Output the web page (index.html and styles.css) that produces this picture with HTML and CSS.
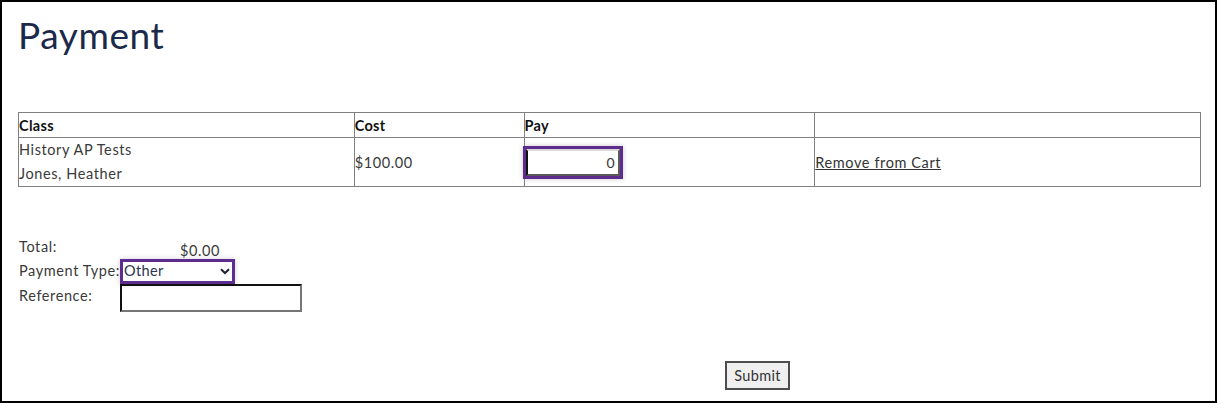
FILE: index.html
```html
<!DOCTYPE html>
<html lang="en">
<head>
<meta charset="utf-8">
<title>Payment</title>
<link rel="stylesheet" href="styles.css">
</head>
<body>
<div class="frame">
  <h1 class="title">Payment</h1>
  <table class="cart">
    <colgroup>
      <col class="c-class"><col class="c-cost"><col class="c-pay"><col class="c-act">
    </colgroup>
    <thead>
      <tr><th>Class</th><th>Cost</th><th>Pay</th><th></th></tr>
    </thead>
    <tbody>
      <tr>
        <td><div class="line">History AP Tests</div><div class="line">Jones, Heather</div></td>
        <td>$100.00</td>
        <td><input class="pay-input" type="text" value="0"></td>
        <td><a class="remove" href="#">Remove from Cart</a></td>
      </tr>
    </tbody>
  </table>
  <div class="summary">
    <div class="lbl lbl-total">Total:</div>
    <div class="total-val">$0.00</div>
    <div class="lbl lbl-type">Payment Type:</div>
    <div class="sel-wrap">
      <select class="sel"><option>Other</option></select>
      <svg class="chev" width="10" height="7" viewBox="0 0 10 7"><path d="M1 1.2 L5 5 L9 1.2" fill="none" stroke="#1c2333" stroke-width="2"/></svg>
    </div>
    <div class="lbl lbl-ref">Reference:</div>
    <div><input class="ref-input" type="text"></div>
  </div>
  <div class="actions"><button class="submit" type="button">Submit</button></div>
</div>
</body>
</html>
```
FILE: styles.css
```css
html, body { margin: 0; padding: 0; background: #fff; }
body { font-family: Lato, "Open Sans", Arial, sans-serif; color: #3a3a3a; }
.frame {
  box-sizing: border-box;
  width: 1217px;
  height: 403px;
  border: 2px solid #000;
  padding: 0 16px;
}
.title {
  margin: 11px 0 0 0;
  font-size: 37px;
  font-weight: 400;
  line-height: 44px;
  color: #1b2a4a;
  letter-spacing: 0.6px;
}
.cart {
  margin-top: 55px;
  width: 1183px;
  border-collapse: collapse;
  border: 1px solid #808080;
  font-size: 14.5px;
  letter-spacing: 0.6px;
}
.c-class { width: 336px; }
.c-cost { width: 170px; }
.c-pay { width: 291px; }
.c-act { width: 386px; }
.cart th, .cart td {
  border: 1px solid #808080;
  padding: 0;
  text-align: left;
  vertical-align: middle;
}
.cart th {
  height: 23px;
  font-weight: 700;
  color: #111;
  padding-top: 1px;
  letter-spacing: 0.3px;
}
.cart td { height: 48px; color: #3a3a3a; }
.line { line-height: 24px; }
.pay-input {
  box-sizing: border-box;
  width: 94px;
  height: 27px;
  margin: 1px 0 0 1px;
  border: 2px solid;
  border-color: #d8d8d8 #5a5a5a #5a5a5a #111;
  outline: 3px solid #5e2b8f;
  box-shadow: 0 0 5px 3px rgba(0,0,0,0.22);
  font-family: inherit;
  font-size: 14px;
  text-align: right;
  padding: 0 3px;
  color: #333;
  display: block;
}
.remove { color: #333; text-decoration: underline; }
.summary {
  margin-top: 52px;
  display: grid;
  grid-template-columns: 102px auto;
  justify-content: start;
  font-size: 14.5px;
  letter-spacing: 0.6px;
}
.lbl { padding-left: 1px; color: #3a3a3a; white-space: nowrap; }
.lbl-total { line-height: 16px; }
.total-val { padding: 4px 0 0 60px; line-height: 16px; }
.lbl-type { padding-top: 3px; }
.sel-wrap { position: relative; margin-top: 3px; width: 109px; height: 19px; margin-left: 3px; }
.sel {
  appearance: none;
  -webkit-appearance: none;
  box-sizing: border-box;
  width: 109px;
  height: 19px;
  border: 0;
  outline: 3px solid #5e2b8f;
  box-shadow: 0 0 5px 3px rgba(0,0,0,0.2);
  background: #fff;
  font-family: inherit;
  font-size: 14.5px;
  letter-spacing: 0.4px;
  color: #2a3350;
  padding: 0 0 2px 1px;
  margin: 0;
  display: block;
}
.chev { position: absolute; left: 97px; top: 6px; pointer-events: none; }
.lbl-ref { padding-top: 6px; }
.ref-input {
  box-sizing: border-box;
  width: 182px;
  height: 28px;
  margin-top: 3px;
  border: 2px solid;
  border-color: #111 #767676 #767676 #111;
  display: block;
}
.actions { padding-left: 707px; margin-top: 49px; }
.submit {
  box-sizing: border-box;
  width: 65px;
  height: 29px;
  border: 2px solid #4d4d4d;
  background: #efefef;
  font-family: inherit;
  font-size: 14.5px;
  letter-spacing: 0.3px;
  color: #333;
  padding: 0;
}
```
